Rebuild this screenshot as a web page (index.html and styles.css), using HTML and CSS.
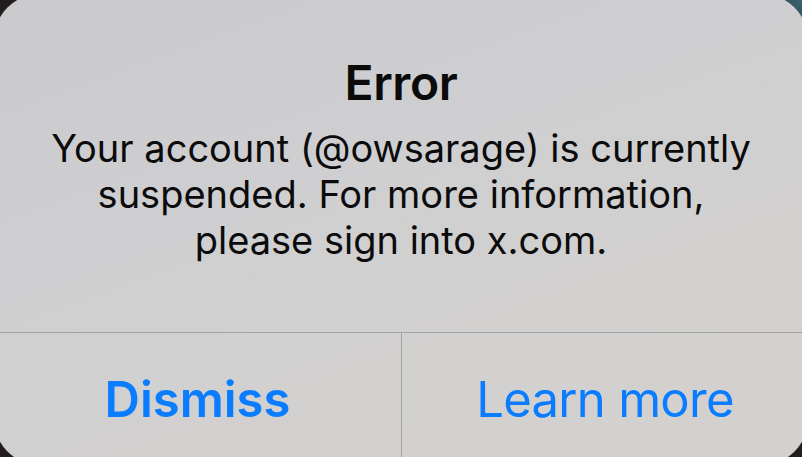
FILE: index.html
```html
<!DOCTYPE html>
<html lang="en">
<head>
    <meta charset="UTF-8">
    <meta name="viewport" content="width=device-width, initial-scale=1.0">
    <title>Error</title>
    <link rel="stylesheet" href="styles.css">
</head>
<body>
    <div class="alert">
        <div class="alert-body">
            <h1 class="alert-title">Error</h1>
            <p class="alert-message">Your account (@owsarage) is currently suspended. For more information, please sign into x.com.</p>
        </div>
        <div class="alert-actions">
            <button class="alert-btn alert-btn-primary">Dismiss</button>
            <button class="alert-btn">Learn more</button>
        </div>
    </div>
</body>
</html>
```

FILE: styles.css
```css
html, body {
    height: 100%;
}
body {
    margin: 0;
    overflow: hidden;
    background: radial-gradient(circle at 100% 0%, #3d6470 0, #2a4650 30px, transparent 32px), #231d1e;
    font-family: Inter, 'Noto Sans', sans-serif;
}
.alert {
    margin: -6px -6px 0 -6px;
    height: 471px;
    border-radius: 46px;
    background: linear-gradient(160deg, #cacacc 0%, #cfcfd1 40%, #d3d1cf 75%, #d3d0cd 100%);
    display: flex;
    flex-direction: column;
}
.alert-body {
    height: 338px;
    box-sizing: border-box;
    padding-top: 61px;
    text-align: center;
    color: #0b0b0b;
}
.alert-title {
    margin: 0;
    font-size: 48px;
    font-weight: 600;
    letter-spacing: -0.4px;
    line-height: 56px;
}
.alert-message {
    margin: 14px auto 0;
    width: 706px;
    font-size: 38px;
    line-height: 46px;
    letter-spacing: 0;
}
.alert-actions {
    flex: 1;
    display: grid;
    grid-template-columns: 1fr 1fr;
    border-top: 1px solid #a4a3a3;
}
.alert-btn {
    background: none;
    border: none;
    margin: 0;
    padding: 0;
    font-family: inherit;
    font-size: 49px;
    letter-spacing: -0.7px;
    color: #0a7cff;
    cursor: pointer;
}
.alert-btn + .alert-btn {
    border-left: 1px solid #a4a3a3;
}
.alert-btn-primary {
    font-weight: 600;
    letter-spacing: 0;
}
```
